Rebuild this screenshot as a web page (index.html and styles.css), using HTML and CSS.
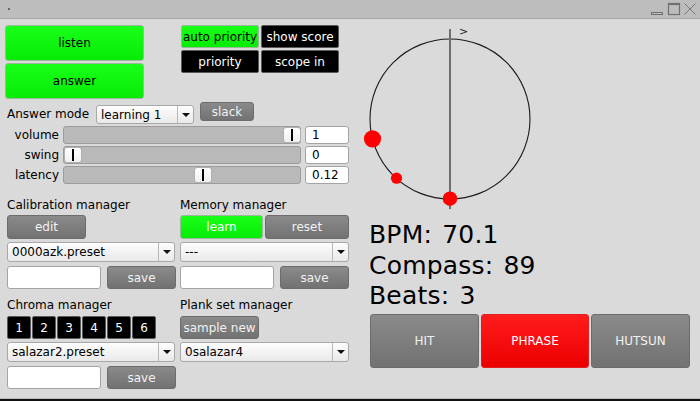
FILE: index.html
```html
<!DOCTYPE html>
<html>
<head>
<meta charset="utf-8">
<link rel="stylesheet" href="styles.css">
</head>
<body>
<div class="window">
  <div class="titlebar">
    <span class="dot"></span>
    <svg class="wctrl" width="50" height="18" viewBox="0 0 50 18">
      <rect x="1.5" y="12.5" width="11" height="2" fill="none" stroke="#707070" stroke-width="1"/>
      <rect x="18.5" y="3.5" width="11" height="11" fill="none" stroke="#707070" stroke-width="1.2"/>
      <line x1="18.5" y1="4.3" x2="29.5" y2="4.3" stroke="#707070" stroke-width="1.6"/>
      <line x1="34.5" y1="3.5" x2="45.5" y2="14.5" stroke="#7a7a7a" stroke-width="1"/>
      <line x1="45.5" y1="3.5" x2="34.5" y2="14.5" stroke="#7a7a7a" stroke-width="1"/>
    </svg>
  </div>
  <div class="main">
    <div class="left">
      <div class="top">
        <div class="bigbtns">
          <div class="btn green big">listen</div>
          <div class="btn green big">answer</div>
        </div>
        <div class="grid4">
          <div class="btn green small">auto priority</div>
          <div class="btn black small">show score</div>
          <div class="btn black small">priority</div>
          <div class="btn black small">scope in</div>
        </div>
      </div>
      <div class="moderow">
        <span class="modelbl">Answer mode</span>
        <div class="select modesel"><span class="val">learning 1</span><span class="arr"></span></div>
        <div class="btn gray slack">slack</div>
      </div>
      <div class="sliders">
        <div class="srow">
          <span class="slbl">volume</span>
          <div class="track"><div class="thumb" style="left: 219px"></div></div>
          <div class="input num">1</div>
        </div>
        <div class="srow">
          <span class="slbl">swing</span>
          <div class="track"><div class="thumb" style="left: 0px"></div></div>
          <div class="input num">0</div>
        </div>
        <div class="srow">
          <span class="slbl">latency</span>
          <div class="track"><div class="thumb" style="left: 130px"></div></div>
          <div class="input num">0.12</div>
        </div>
      </div>
      <div class="managers">
        <div class="mcol">
          <div class="mlbl">Calibration manager</div>
          <div class="brow"><div class="btn gray edit">edit</div></div>
          <div class="select msel"><span class="val">0000azk.preset</span><span class="arr"></span></div>
          <div class="irow"><div class="input field"></div><div class="btn gray save">save</div></div>
        </div>
        <div class="mcol">
          <div class="mlbl">Memory manager</div>
          <div class="brow"><div class="btn green learn">learn</div><div class="btn gray reset">reset</div></div>
          <div class="select msel"><span class="val">---</span><span class="arr"></span></div>
          <div class="irow"><div class="input field"></div><div class="btn gray save">save</div></div>
        </div>
        <div class="mcol second">
          <div class="mlbl">Chroma manager</div>
          <div class="brow b3">
            <div class="btn black num6">1</div>
            <div class="btn black num6">2</div>
            <div class="btn black num6">3</div>
            <div class="btn black num6">4</div>
            <div class="btn black num6">5</div>
            <div class="btn black num6">6</div>
          </div>
          <div class="select msel"><span class="val">salazar2.preset</span><span class="arr"></span></div>
          <div class="irow"><div class="input field"></div><div class="btn gray save">save</div></div>
        </div>
        <div class="mcol second">
          <div class="mlbl">Plank set manager</div>
          <div class="brow b3"><div class="btn gray sample">sample new</div></div>
          <div class="select msel"><span class="val">0salazar4</span><span class="arr"></span></div>
        </div>
      </div>
    </div>
    <div class="right">
      <svg class="dial" width="340" height="201" viewBox="0 0 340 201">
        <circle cx="100" cy="100" r="80" fill="none" stroke="#1a1a1a" stroke-width="1.1"/>
        <line x1="100" y1="10" x2="100" y2="190" stroke="#6e6e6e" stroke-width="2"/>
        <text x="109" y="16" font-family="DejaVu Sans" font-size="11" fill="#222">&gt;</text>
        <circle cx="22.5" cy="119.8" r="8.6" fill="#ff0000"/>
        <circle cx="46.5" cy="159.2" r="5.6" fill="#ff0000"/>
        <circle cx="100" cy="179.7" r="7.2" fill="#ff0000"/>
      </svg>
      <div class="stats">
        <div>BPM: 70.1</div>
        <div>Compass: 89</div>
        <div>Beats: 3</div>
      </div>
      <div class="modes">
        <div class="btn gray mode hit">HIT</div>
        <div class="btn red mode phrase">PHRASE</div>
        <div class="btn gray mode hutsun">HUTSUN</div>
      </div>
    </div>
  </div>
  <div class="footer"></div>
</div>
</body>
</html>
```

FILE: styles.css
```css
html, body {
  margin: 0;
  padding: 0;
}
body {
  background: #dadada;
  font-family: "DejaVu Sans", Verdana, sans-serif;
  font-size: 12px;
  color: #000;
  width: 700px;
  height: 401px;
  overflow: hidden;
}
.window {
  display: flex;
  flex-direction: column;
  height: 401px;
}
.titlebar {
  height: 18px;
  background: #bdbdbd;
  border-bottom: 1px solid #a9a9a9;
  display: flex;
  align-items: flex-start;
}
.dot {
  width: 2px;
  height: 2px;
  background: #686868;
  margin: 8px 0 0 8px;
}
.wctrl {
  margin-left: auto;
  display: block;
}
.main {
  flex: 1;
  display: flex;
}
.footer {
  height: 2px;
  background: #111;
  border-top: 1px solid #bcbcbc;
}

/* buttons */
.btn {
  display: flex;
  align-items: center;
  justify-content: center;
  box-sizing: border-box;
  border-radius: 3px;
  font-size: 12px;
  white-space: nowrap;
}
.green {
  background: linear-gradient(#18ff18, #06ec06);
  border: 1px solid #9ab89a;
  color: #000;
}
.black {
  background: #000;
  border: 1px solid #5a5a5a;
  color: #fff;
}
.gray {
  background: linear-gradient(#8a8a8a, #727272);
  border: 1px solid #6c6c6c;
  color: #f2f2f2;
}
.red {
  background: linear-gradient(#ff1c1c, #ec0000);
  border: 1px solid #e02020;
  color: #fff;
}

.left {
  width: 345px;
  padding-left: 5px;
  padding-top: 6px;
}
.top {
  display: flex;
  align-items: flex-start;
}
.bigbtns {
  display: flex;
  flex-direction: column;
  gap: 2px;
  width: 139px;
}
.big {
  height: 36px;
}
.grid4 {
  margin-left: 37px;
  display: grid;
  grid-template-columns: 78px 78px;
  grid-auto-rows: 23px;
  gap: 2px;
}
.small {
  border-radius: 2px;
}

.moderow {
  display: flex;
  align-items: flex-start;
  margin-top: 3px;
  height: 22px;
}
.modelbl {
  margin-left: 2px;
  margin-top: 3px;
  line-height: 19px;
  width: 89px;
}
.select {
  display: flex;
  align-items: center;
  box-sizing: border-box;
  height: 20px;
  border: 1px solid #a8a8a8;
  border-radius: 3px;
  background: linear-gradient(#fdfdfd, #e9e9e9);
  padding-left: 4px;
  font-size: 12px;
}
.select .val {
  flex: 1;
  white-space: nowrap;
}
.select .arr {
  width: 15px;
  height: 100%;
  border-left: 1px solid #b8b8b8;
  display: flex;
  align-items: center;
  justify-content: center;
}
.select .arr::after {
  content: "";
  border-left: 4px solid transparent;
  border-right: 4px solid transparent;
  border-top: 4px solid #111;
}
.modesel {
  width: 98px;
  height: 19px;
  margin-top: 3px;
}
.slack {
  width: 54px;
  height: 19px;
  margin-left: 6px;
}

.sliders {
  margin-top: 2px;
  display: flex;
  flex-direction: column;
  gap: 2px;
}
.srow {
  display: flex;
  align-items: center;
  height: 18px;
}
.slbl {
  width: 54px;
  text-align: right;
  margin-right: 4px;
}
.track {
  position: relative;
  width: 238px;
  height: 18px;
  box-sizing: border-box;
  background: #b9b9b9;
  border: 1px solid #9c9c9c;
  border-radius: 3px;
}
.thumb {
  position: absolute;
  top: 0;
  width: 18px;
  height: 16px;
  box-sizing: border-box;
  background: linear-gradient(#ffffff, #f0f0f0);
  border: 1px solid #b0b0b0;
  border-radius: 3px;
}
.thumb::after {
  content: "";
  position: absolute;
  left: 7px;
  top: 1px;
  width: 2px;
  height: 12px;
  background: #000;
}
.input {
  box-sizing: border-box;
  background: #fff;
  border: 1px solid #a4a4a4;
  border-radius: 3px;
}
.num {
  width: 44px;
  height: 18px;
  margin-left: 4px;
  padding-left: 6px;
  line-height: 16px;
}

.managers {
  margin-top: 13px;
  padding-left: 2px;
  display: grid;
  grid-template-columns: 169px 169px;
  column-gap: 4px;
  row-gap: 8px;
}
.mcol {
  display: flex;
  flex-direction: column;
}
.mlbl {
  line-height: 16px;
  height: 16px;
}
.brow {
  display: flex;
  gap: 2px;
  margin-top: 2px;
  height: 24px;
}
.brow.b3 {
  margin-top: 3px;
  height: 23px;
  gap: 1px;
}
.edit {
  width: 79px;
}
.learn {
  width: 83px;
  color: #fff;
  border-radius: 3px;
}
.reset {
  width: 84px;
}
.num6 {
  width: 24px;
  border-radius: 2px;
}
.sample {
  width: 79px;
}
.msel {
  margin-top: 3px;
  width: 168px;
}
.mcol:nth-child(even) .msel {
  width: 169px;
}
.irow {
  display: flex;
  align-items: flex-end;
  margin-top: 4px;
  height: 23px;
}
.field {
  width: 94px;
  height: 23px;
}
.save {
  width: 69px;
  height: 23px;
  margin-left: 6px;
}

.right {
  flex: 1;
  display: flex;
  flex-direction: column;
  padding-left: 20px;
}
.dial {
  display: block;
  margin-left: -20px;
}
.stats {
  font-size: 25px;
  line-height: 30.5px;
  letter-spacing: 0.2px;
  word-spacing: 2px;
  margin-left: -1px;
  color: #000;
}
.modes {
  display: flex;
  gap: 2px;
  margin-top: 2px;
}
.mode {
  height: 54px;
}
.hit {
  width: 109px;
}
.phrase {
  width: 108px;
}
.hutsun {
  width: 99px;
}
```
